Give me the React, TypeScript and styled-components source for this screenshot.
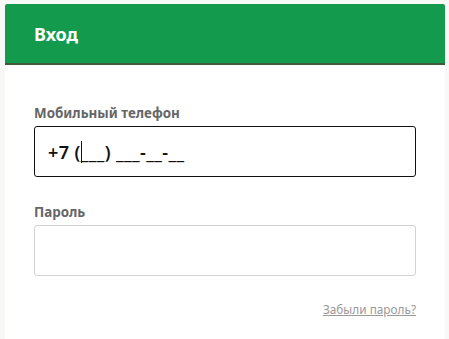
import styled, { createGlobalStyle } from 'styled-components'

const GlobalStyle = createGlobalStyle`
  html, body {
    margin: 0;
    padding: 0;
    background: #f8f8f7;
    font-family: 'Noto Sans', 'Open Sans', sans-serif;
  }
`

const Page = styled.div`
  padding: 4px 4px 0 5px;
  height: 335px;
  overflow: hidden;
`

const Card = styled.div`
  width: 440px;
  background: #fff;
  border-radius: 2px 2px 0 0;
  min-height: 340px;
`

const Header = styled.div`
  height: 59px;
  background: #149a4c;
  border-bottom: 2px solid #3e5b39;
  border-radius: 2px 2px 0 0;
  display: flex;
  align-items: center;
  padding: 0 29px;
`

const Title = styled.h1`
  margin: 0;
  color: #fff;
  font-size: 18px;
  font-weight: 700;
  letter-spacing: -0.1px;
`

const Body = styled.div`
  padding: 39px 29px 0 29px;
  display: flex;
  flex-direction: column;
`

const Field = styled.div<{ $gap?: number }>`
  display: flex;
  flex-direction: column;
  margin-bottom: ${(p) => p.$gap ?? 0}px;
`

const Label = styled.label<{ $space: number }>`
  font-size: 13.4px;
  line-height: 18px;
  font-weight: 700;
  color: #666;
  margin-bottom: ${(p) => p.$space}px;
`

const InputBox = styled.div<{ $active?: boolean }>`
  box-sizing: border-box;
  height: 51px;
  border: 1px solid ${(p) => (p.$active ? '#111' : '#d3d3d3')};
  border-radius: 3px;
  background: #fff;
  display: flex;
  align-items: center;
  padding: 0 13px;
  font-size: 18px;
  font-weight: 600;
  letter-spacing: 0.4px;
  color: #111;
  white-space: pre;
`

const Caret = styled.span`
  display: inline-block;
  width: 0;
  height: 22px;
  border-left: 1px solid #111;
  margin-right: -1px;
  vertical-align: middle;
`

const Forgot = styled.a`
  align-self: flex-end;
  font-size: 11.8px;
  line-height: 16px;
  color: #999;
  text-decoration: underline;
  cursor: pointer;
`

export default function App() {
  return (
    <>
      <GlobalStyle />
      <Page>
        <Card>
          <Header>
            <Title>Вход</Title>
          </Header>
          <Body>
            <Field $gap={26}>
              <Label $space={4}>Мобильный телефон</Label>
              <InputBox $active>
                +7 (<Caret />___) ___-__-__
              </InputBox>
            </Field>
            <Field $gap={25}>
              <Label $space={4}>Пароль</Label>
              <InputBox />
            </Field>
            <Forgot>Забыли пароль?</Forgot>
          </Body>
        </Card>
      </Page>
    </>
  )
}
